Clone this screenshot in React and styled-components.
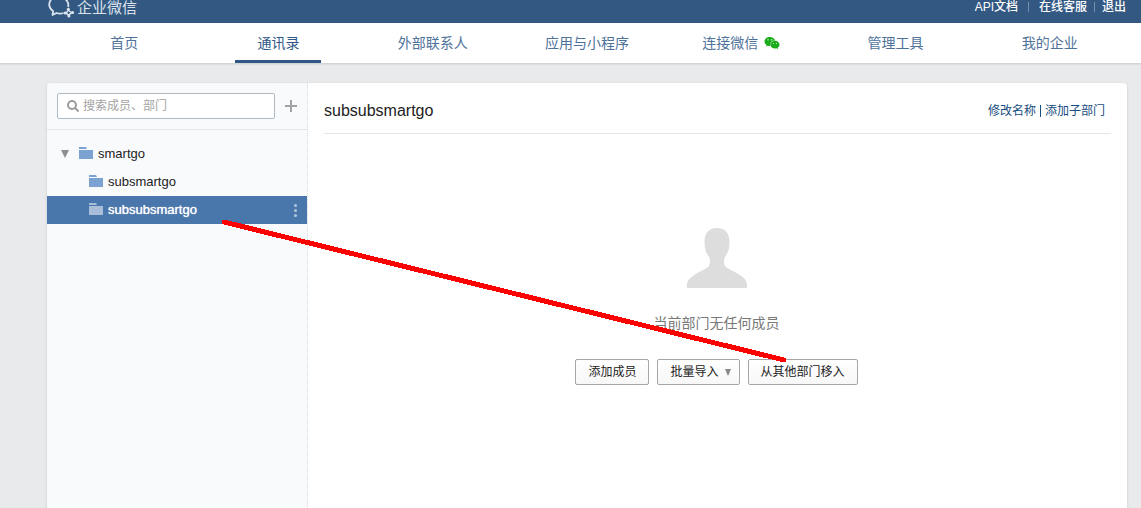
import React from "react";
import styled, { createGlobalStyle } from "styled-components";
import { FaWeixin } from "react-icons/fa";

const GlobalStyle = createGlobalStyle`
  *, *::before, *::after { box-sizing: border-box; }
  body {
    margin: 0;
    background: #e8eaec;
    color: #222;
    font: 12px/20px "Liberation Sans", "Noto Sans CJK SC", sans-serif;
  }
  a { text-decoration: none; color: inherit; }
  button, input { font: inherit; color: inherit; }
`;

const Page = styled.div`
  position: relative;
  display: flex;
  flex-direction: column;
  min-height: 100vh;
  overflow: hidden;
`;

const Header = styled.header`
  display: flex;
  justify-content: space-between;
  height: 23px;
  padding: 0 15px 0 47px;
  background: #335983;
  color: #fff;
`;

const Brand = styled.a`
  display: flex;
  height: 18px;
  font-size: 15px;
  line-height: 16px;
  color: #dbe3ec;
`;

const BrandMark = styled.svg`
  width: 30px;
  height: 20px;
`;

const TopLinks = styled.div`
  display: flex;
  align-items: center;
  height: 14px;
  font-weight: 500;
`;

const TopDivider = styled.span`
  width: 1px;
  height: 10px;
  margin: 0 ${(p) => (p.$wide ? 10 : 7)}px;
  background: #7390ae;
`;

const Nav = styled.nav`
  display: flex;
  height: 40px;
  padding: 0 14px 0 47px;
  background: #fff;
  box-shadow: 0 1px 2px rgba(0, 0, 0, 0.15);
`;

const NavCell = styled.div`
  flex: 1;
  display: flex;
  justify-content: center;
`;

const NavLink = styled.a`
  display: flex;
  align-items: center;
  gap: 6px;
  padding: 3px 22px 0;
  font-size: 14px;
  color: ${(p) => (p.$active ? "#2f5785" : "#4f729b")};
  border-bottom: 3px solid ${(p) => (p.$active ? "#2f5785" : "transparent")};
`;

const WechatIcon = styled(FaWeixin)`
  width: 16px;
  height: 14px;
  color: #1aad19;
`;

const Panel = styled.main`
  flex: 1;
  display: flex;
  margin: 20px 14px 0 47px;
  background: #fff;
  border-radius: 4px 4px 0 0;
  box-shadow: 0 1px 3px rgba(0, 0, 0, 0.15);
  overflow: hidden;
`;

const Sidebar = styled.aside`
  flex: 0 0 261px;
  background: #f9fafc;
  border-right: 1px dotted #d5d8dc;
`;

const SearchBar = styled.div`
  display: flex;
  align-items: center;
  justify-content: space-between;
  height: 47px;
  padding: 0 10px;
  border-bottom: 1px solid #e4e6e9;
`;

const SearchField = styled.label`
  display: flex;
  align-items: center;
  gap: 4px;
  width: 218px;
  height: 26px;
  padding: 0 8px 0 9px;
  background: #fff;
  border: 1px solid #adbbc6;
  border-radius: 2px;
`;

const SearchInput = styled.input`
  flex: 1;
  min-width: 0;
  padding: 0;
  border: 0;
  outline: 0;
  background: none;
  &::placeholder { color: #a3a3a3; opacity: 1; }
`;

const IconButton = styled.button`
  display: flex;
  padding: 0;
  border: 0;
  background: none;
`;

const Tree = styled.ul`
  margin: 0;
  padding: 10px 0;
  list-style: none;
`;

const TreeRow = styled.li`
  display: flex;
  align-items: center;
  height: 28px;
  padding: 0 10px 0 ${(p) => (p.$child ? 42 : 14)}px;
  font-size: 13px;
  color: ${(p) => (p.$selected ? "#fff" : "#222")};
  background: ${(p) => (p.$selected ? "#4a77ab" : "none")};
  text-shadow: ${(p) => (p.$selected ? "0 0 1px #fff" : "none")};
`;

const TreeLink = styled.a`
  flex: 1;
  display: flex;
  align-items: center;
  gap: 5px;
`;

const Toggle = styled(IconButton)`
  margin-right: 10px;
`;

const Content = styled.section`
  flex: 1;
  padding: 0 16px;
`;

const ContentHeader = styled.div`
  display: flex;
  align-items: center;
  justify-content: space-between;
  height: 51px;
  padding: 5px 6px 0 0;
  border-bottom: 1px solid #e4e6e9;
`;

const Title = styled.h1`
  margin: 0;
  font-size: 16px;
  font-weight: 400;
`;

const Actions = styled.div`
  display: flex;
  align-items: center;
  gap: 4px;
  color: #174d80;
`;

const ActionDivider = styled.span`
  width: 1px;
  height: 12px;
  background: #174d80;
`;

const Empty = styled.div`
  display: flex;
  flex-direction: column;
  align-items: center;
  padding: 94px 2px 0 0;
`;

const EmptyText = styled.p`
  margin: 25px 0 26px;
  font-size: 14px;
  color: #787878;
`;

const ButtonRow = styled.div`
  display: flex;
  gap: 8px;
`;

const Button = styled.button`
  display: flex;
  align-items: center;
  gap: 6px;
  height: 26px;
  padding: 0 ${(p) => (p.$menu ? 8 : 12)}px 0 12px;
  border: 1px solid #a6a6a6;
  border-radius: 2px;
  background: linear-gradient(#fff, #f7f7f7);
`;

const Arrow = styled.svg`
  position: absolute;
  top: 0;
  left: 0;
  width: 1141px;
  height: 508px;
  pointer-events: none;
`;

const NAV = ["首页", "通讯录", "外部联系人", "应用与小程序", "连接微信", "管理工具", "我的企业"];

const Folder = ({ color }) => (
  <svg width="14" height="14" viewBox="0 0 14 14" fill={color} aria-hidden="true">
    <path d="M0 0H7L8 2H0ZM0 3H14V12H0Z" />
  </svg>
);

const Triangle = ({ width, height, color }) => (
  <svg width={width} height={height} viewBox="0 0 8 8" preserveAspectRatio="none" fill={color} aria-hidden="true">
    <path d="M0 0H8L4 8Z" />
  </svg>
);

export default function App() {
  return (
    <Page>
      <GlobalStyle />
      <Header>
        <Brand href="#">
          <BrandMark viewBox="0 0 30 20" fill="none" stroke="#dbe3ec" strokeWidth="1.8" strokeLinejoin="round" aria-hidden="true">
            <path d="M4.500 -1C1 3 1.500 8 6.200 11.200L5.500 15L9.500 13C12 13.800 14 13.800 16.500 13M18.500 -1C21 1.500 21.700 4 21.200 7" />
            <path strokeWidth="1.3" d="M21.500 9C21.800 11 23.500 12.300 25.800 12.500C23.500 13 22.200 14.200 22 16.300C21.400 14.200 20.300 13.300 18 13C20.300 12.500 21.300 11.300 21.500 9Z" />
            <g fill="#dbe3ec" stroke="none">
              <circle cx="21.300" cy="9.200" r="1.500" />
              <circle cx="25.600" cy="12.400" r="1.500" />
              <circle cx="21.900" cy="16" r="1.500" />
              <circle cx="18.200" cy="13" r="1.500" />
            </g>
          </BrandMark>
          企业微信
        </Brand>
        <TopLinks>
          <a href="#">API文档</a>
          <TopDivider $wide />
          <a href="#">在线客服</a>
          <TopDivider />
          <a href="#">退出</a>
        </TopLinks>
      </Header>
      <Nav>
        {NAV.map((label) => (
          <NavCell key={label}>
            <NavLink href="#" $active={label === "通讯录"}>
              {label}
              {label === "连接微信" && <WechatIcon />}
            </NavLink>
          </NavCell>
        ))}
      </Nav>
      <Panel>
        <Sidebar>
          <SearchBar>
            <SearchField>
              <svg width="12" height="12" viewBox="0 0 12 12" fill="none" stroke="#9b9b9b" strokeWidth="2" aria-hidden="true">
                <circle cx="5" cy="5" r="4" />
                <path d="M8 8L11.500 11.500" />
              </svg>
              <SearchInput type="text" placeholder="搜索成员、部门" aria-label="搜索成员、部门" />
            </SearchField>
            <IconButton aria-label="添加">
              <svg width="12" height="12" viewBox="0 0 12 12" fill="#a3a3a3" aria-hidden="true">
                <path d="M5 0H7V5H12V7H7V12H5V7H0V5H5Z" />
              </svg>
            </IconButton>
          </SearchBar>
          <Tree>
            <TreeRow>
              <Toggle aria-label="收起">
                <Triangle width={8} height={8} color="#8c8f93" />
              </Toggle>
              <TreeLink href="#"><Folder color="#7ba2d1" />smartgo</TreeLink>
            </TreeRow>
            <TreeRow $child>
              <TreeLink href="#"><Folder color="#7ba2d1" />subsmartgo</TreeLink>
            </TreeRow>
            <TreeRow $child $selected>
              <TreeLink href="#"><Folder color="#a8bdd8" />subsubsmartgo</TreeLink>
              <IconButton aria-label="更多">
                <svg width="3" height="13" viewBox="0 0 3 13" fill="#b4c6dc" aria-hidden="true">
                  <circle cx="1.500" cy="1.500" r="1.500" />
                  <circle cx="1.500" cy="6.500" r="1.500" />
                  <circle cx="1.500" cy="11.500" r="1.500" />
                </svg>
              </IconButton>
            </TreeRow>
          </Tree>
        </Sidebar>
        <Content>
          <ContentHeader>
            <Title>subsubsmartgo</Title>
            <Actions>
              <a href="#">修改名称</a>
              <ActionDivider />
              <a href="#">添加子部门</a>
            </Actions>
          </ContentHeader>
          <Empty>
            <svg width="60" height="60" viewBox="0 0 60 60" fill="#ddd" aria-hidden="true">
              <path d="M30 0C38 0 42.500 5 42.500 14C42.500 21 41 25 38.500 28C36.500 31 36.500 36 38.500 38.500C42 42 48 43 54 48C58 51 60 53 60 57V60H0V57C0 53 2 51 6 48C12 43 18 42 21.500 38.500C23.500 36 23.500 31 21.500 28C19 25 17.500 21 17.500 14C17.500 5 22 0 30 0Z" />
            </svg>
            <EmptyText>当前部门无任何成员</EmptyText>
            <ButtonRow>
              <Button>添加成员</Button>
              <Button $menu>批量导入<Triangle width={6} height={7} color="#888" /></Button>
              <Button>从其他部门移入</Button>
            </ButtonRow>
          </Empty>
        </Content>
      </Panel>
      <Arrow viewBox="0 0 1141 508" aria-hidden="true">
        <path d="M224 222L784 360" stroke="#f00" strokeWidth="5" strokeLinecap="round" shapeRendering="crispEdges" />
      </Arrow>
    </Page>
  );
}
